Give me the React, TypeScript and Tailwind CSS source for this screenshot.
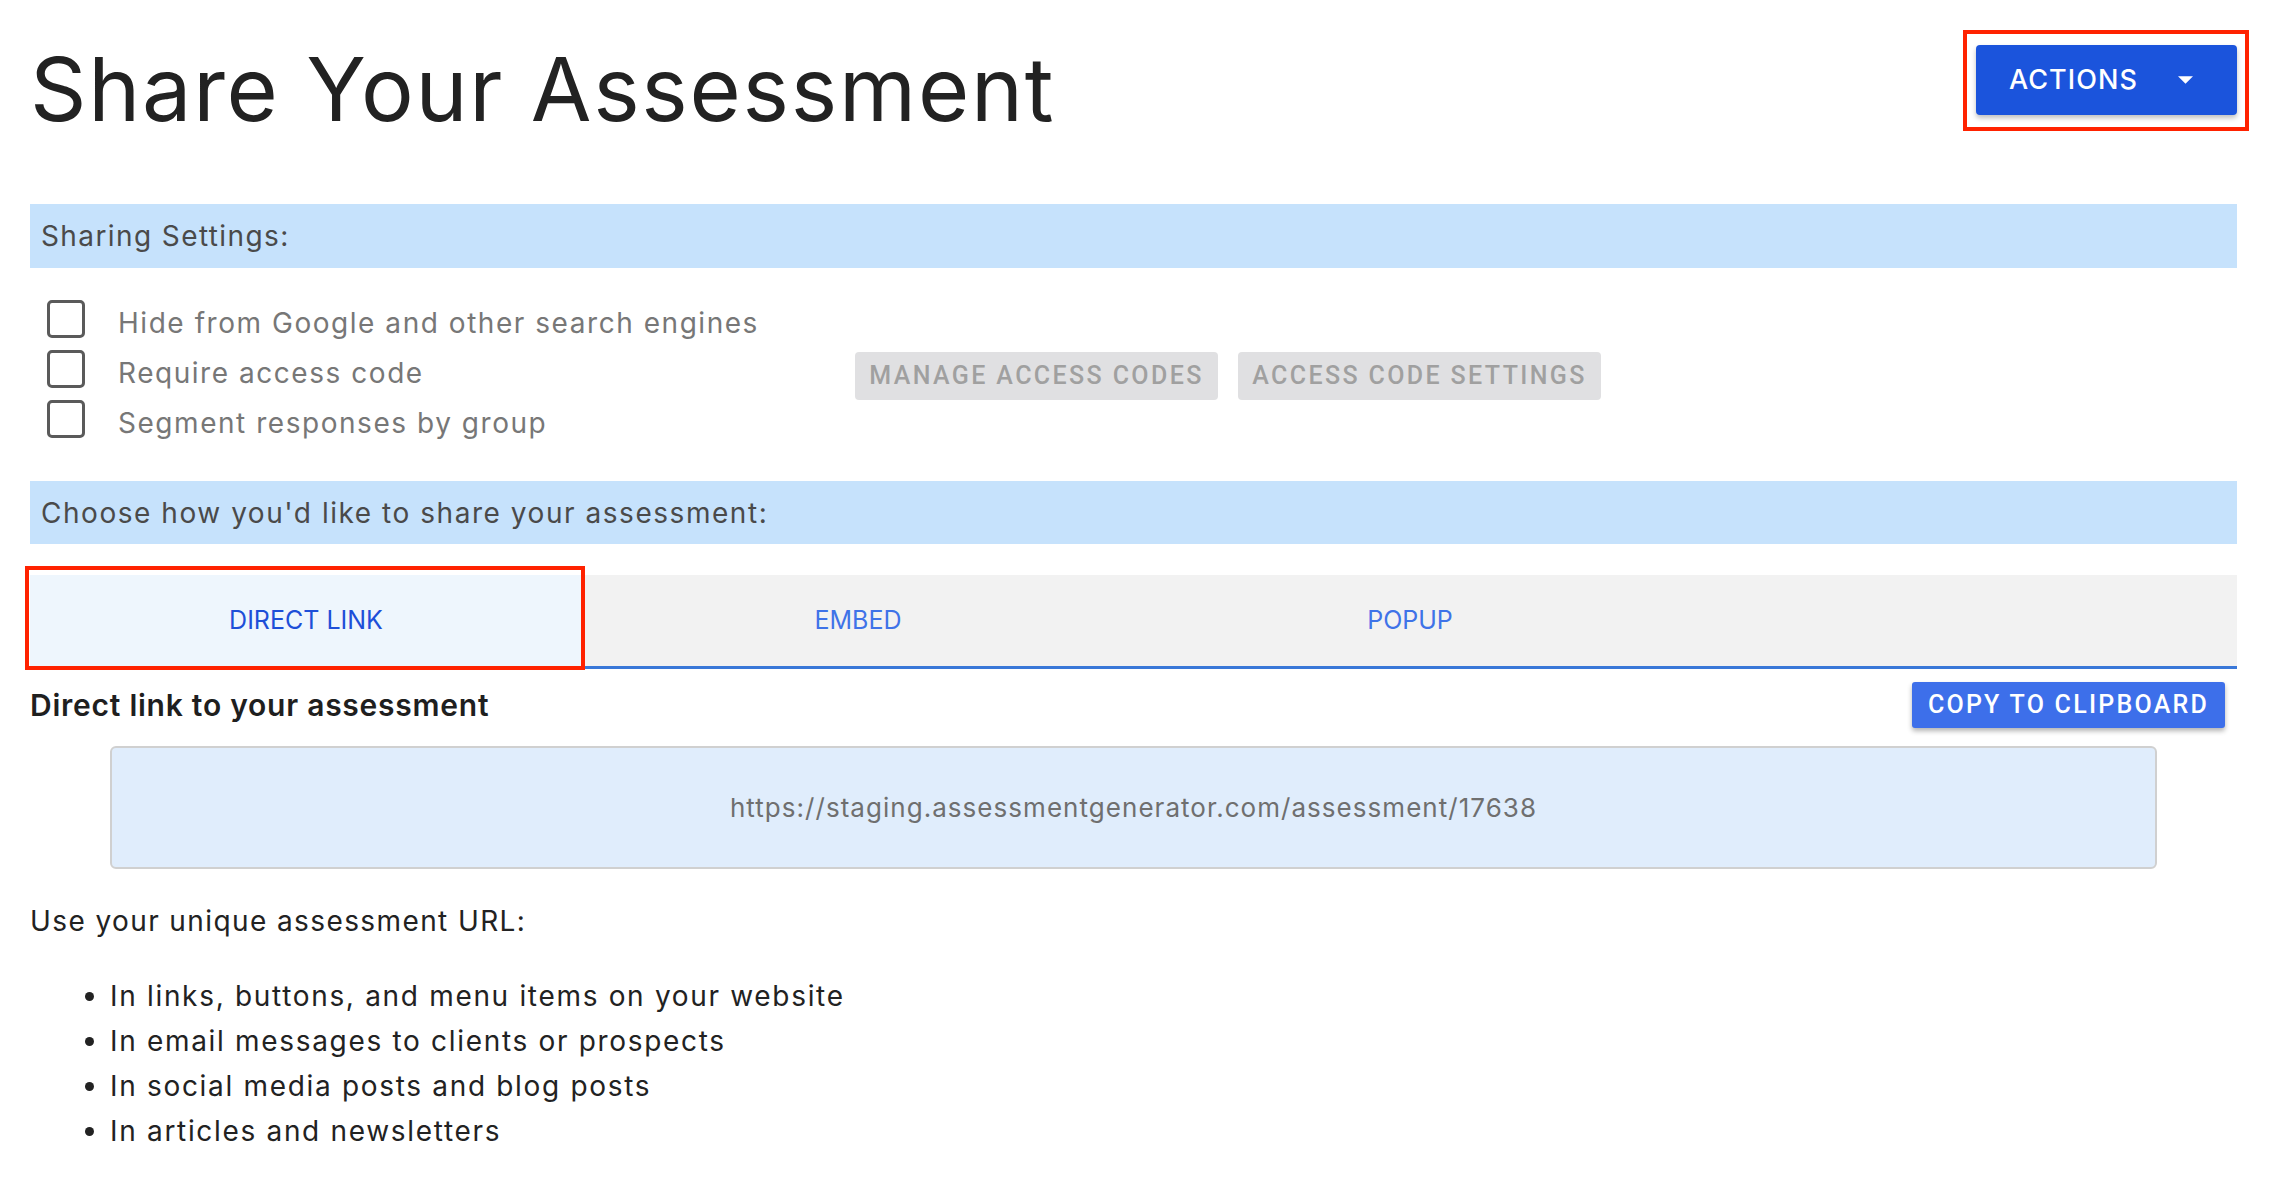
import React, { useState } from "react";

const tabs = ["DIRECT LINK", "EMBED", "POPUP"];

const options = [
  "Hide from Google and other search engines",
  "Require access code",
  "Segment responses by group",
];

const uses = [
  "In links, buttons, and menu items on your website",
  "In email messages to clients or prospects",
  "In social media posts and blog posts",
  "In articles and newsletters",
];

function Checkbox({ checked, onChange }: { checked: boolean; onChange: () => void }) {
  return (
    <button
      type="button"
      onClick={onChange}
      className="w-[38px] h-[38px] shrink-0 rounded-[5px] border-[3.5px] border-[#5a5a5a] bg-white flex items-center justify-center"
    >
      {checked && (
        <svg viewBox="0 0 24 24" className="w-[28px] h-[28px]" fill="none" stroke="#5a5a5a" strokeWidth="3">
          <path d="M5 12l5 5 9-10" />
        </svg>
      )}
    </button>
  );
}

export default function App() {
  const [active, setActive] = useState(0);
  const [checked, setChecked] = useState<boolean[]>([false, false, false]);

  return (
    <div className="min-h-screen bg-white pl-[30px] pr-[33px] font-['Inter','Noto_Sans',sans-serif] text-[#222]">
      {/* page header */}
      <header className="h-[204px] flex justify-between items-start">
        <h1 className="mt-[45px] text-[88px] leading-none font-normal tracking-[0.02em] text-[#222]">
          Share Your Assessment
        </h1>
        <div className="relative mt-[45px]">
          <div className="absolute -left-[13px] -right-[12px] -top-[15px] -bottom-[16px] border-[4px] border-[#ff2200] pointer-events-none" />
          <button
            type="button"
            className="w-[261px] h-[70px] rounded-[4px] bg-[#1b54dc] text-white shadow-[0_3px_5px_rgba(0,0,0,0.25)] flex items-center pl-[33px]"
          >
            <span className="text-[27px] tracking-[0.04em] font-medium">ACTIONS</span>
            <svg viewBox="0 0 10 5" className="ml-[40px] w-[15px] h-[8px]" fill="white">
              <path d="M0 0h10L5 5z" />
            </svg>
          </button>
        </div>
      </header>

      {/* sharing settings */}
      <div className="h-[64px] bg-[#c6e2fc] flex items-center px-[11px] text-[28px] tracking-[0.05em] text-[#4a4a4a]">
        Sharing Settings:
      </div>

      <div className="flex items-start mt-[32px]">
        <div className="w-[825px] flex flex-col gap-[12px] pl-[17px]">
          {options.map((o, i) => (
            <label key={o} className="h-[38px] flex items-center gap-[33px] cursor-pointer">
              <Checkbox
                checked={checked[i]}
                onChange={() => setChecked(checked.map((c, j) => (j === i ? !c : c)))}
              />
              <span className="translate-y-[4px] text-[28px] leading-[38px] text-[#777] tracking-[0.055em]">{o}</span>
            </label>
          ))}
        </div>
        <div className="flex gap-[20px] mt-[52px] font-['Roboto',sans-serif]">
          <button type="button" className="w-[363px] h-[48px] rounded-[4px] bg-[#e0e0e2] text-[#a0a0a0] text-[25px] font-medium tracking-[0.095em]">
            MANAGE ACCESS CODES
          </button>
          <button type="button" className="w-[363px] h-[48px] rounded-[4px] bg-[#e0e0e2] text-[#a0a0a0] text-[25px] font-medium tracking-[0.095em]">
            ACCESS CODE SETTINGS
          </button>
        </div>
      </div>

      {/* sharing method */}
      <div className="mt-[43px] h-[63px] bg-[#c6e2fc] flex items-center px-[11px] text-[28px] tracking-[0.055em] text-[#4a4a4a]">
        Choose how you'd like to share your assessment:
      </div>

      <div className="mt-[31px] h-[94px] bg-[#f2f2f2] border-b-[3px] border-[#3a78d8] flex">
        {tabs.map((t, i) => (
          <div key={t} className="relative w-[552px]">
            {i === 0 && (
              <div className="absolute -left-[5px] -right-[3px] -top-[9px] -bottom-[4px] border-[4px] border-[#ff2200] pointer-events-none z-10" />
            )}
            <button
              type="button"
              onClick={() => setActive(i)}
              className={`w-full h-full flex items-center justify-center text-[25px] ${
                active === i ? "bg-[#eef6fd] text-[#1d4fd8]" : "text-[#3f73e8]"
              }`}
            >
              {t}
            </button>
          </div>
        ))}
      </div>

      <div className="mt-[13px] h-[46px] flex items-center justify-between">
        <h2 className="text-[30px] font-semibold tracking-[0.025em] text-[#1f1f1f]">Direct link to your assessment</h2>
        <button
          type="button"
          className="mr-[12px] w-[313px] h-[46px] rounded-[3px] bg-[#3d6fea] text-white text-[25px] font-medium tracking-[0.09em] shadow-[0_3px_5px_rgba(0,0,0,0.3)] font-['Roboto',sans-serif]"
        >
          COPY TO CLIPBOARD
        </button>
      </div>

      <div className="mt-[18px] mx-[80px] h-[123px] rounded-[6px] border-[2px] border-[#d0d0d0] bg-[#e0edfc] flex items-center justify-center text-[26px] tracking-[0.04em] text-[#6f6f6f]">
        https://staging.assessmentgenerator.com/assessment/17638
      </div>

      <p className="mt-[34px] text-[28px] leading-[36px] tracking-[0.05em] text-[#222]">Use your unique assessment URL:</p>

      <ul className="mt-[35px] pl-[80px] list-disc text-[28px] leading-[45px] tracking-[0.06em] text-[#222]">
        {uses.map((u) => (
          <li key={u}>{u}</li>
        ))}
      </ul>
    </div>
  );
}
